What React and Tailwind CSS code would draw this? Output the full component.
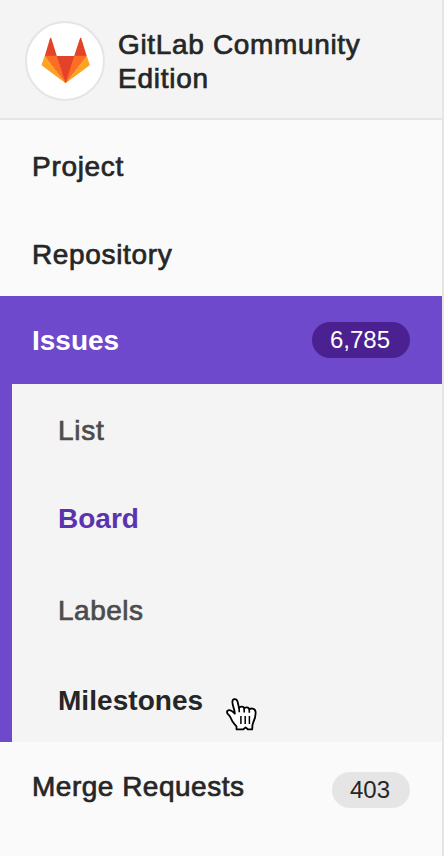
function Logo() {
  return (
    <svg className="h-full w-full" viewBox="0 0 80 80">
      <path fill="#e24329" d="M25.1 17.1a.6.6 0 0 1 1.1 0L31.8 35H49.2L55.1 17.1a.6.6 0 0 1 1.1 0L61.7 35 40.6 62.3 19.8 35Z" />
      <path fill="#fc6d26" d="M19.8 34.7H31.8L40.6 62.3ZM49.3 34.7H61.7L40.6 62.3Z" />
      <path fill="#fca326" d="M19.8 34.7 16.8 42.9a1.9 1.9 0 0 0 .7 2.1L40.6 62.3ZM61.7 34.7 64.5 42.9a1.9 1.9 0 0 1-.7 2.1L40.6 62.3Z" />
    </svg>
  );
}

function Pointer() {
  return (
    <svg className="absolute left-[225px] top-[697px] h-9 w-8" viewBox="0 0 32 36" fill="none">
      <path
        d="M11.5 32.3V29.5C9.5 27 7.5 25.5 6.5 22.5C5.8 20.3 4.7 18.8 3 17.2C1.5 15.7 1.7 13.8 3.3 13.3C5.7 12.6 7.7 14.4 9.8 16.7C9.9 12.5 7.5 9.5 7.4 5C7.3 1.3 11.5 1 12.5 4.5L14.1 11.2C14.5 9.1 19 8.9 19.2 11.7C20 9.7 24 9.8 24.3 12.7C25.4 10.9 30 11 30.5 14.5C31 18.5 29.9 22 28.3 25.2C27.3 27.2 27.2 29 27.2 32.3H22.8L20.6 30.4L18.3 32.3Z"
        fill="white" stroke="black" strokeWidth="1.8" strokeLinejoin="round"
      />
      <path d="M14.2 11V15.2M19.2 11.7V15.4M24.3 12.7V15.8" stroke="black" strokeWidth="1.6" />
      <path d="M15.9 19V27M20.2 19V27M24.4 19V27" stroke="black" strokeWidth="1.5" />
    </svg>
  );
}

export default function App() {
  return (
    <div className="relative h-[856px] w-[444px] overflow-hidden border-r-2 border-[#e5e5e5] bg-[#fafafa] font-['Liberation_Sans',Arial,sans-serif] text-[28px] text-[#262626]">
      <header className="flex h-[120px] border-b-2 border-[#e5e5e5] bg-[#f4f4f4] pl-[25px]">
        <div className="mt-[21px] h-20 w-20 shrink-0 overflow-hidden rounded-full border-2 border-[#e5e5e5] bg-white">
          <div className="-m-[2px] h-20 w-20"><Logo /></div>
        </div>
        <h1 className="ml-[13px] mt-7 leading-[34px] tracking-[0.66px] [-webkit-text-stroke:0.7px_currentColor]">
          GitLab Community<br />
          <span className="tracking-[0.75px]">Edition</span>
        </h1>
      </header>
      <nav>
        <a className="flex h-[88px] items-center pl-8 pt-1.5 tracking-[0.7px] [-webkit-text-stroke:0.7px_currentColor]">Project</a>
        <a className="flex h-[88px] items-center pl-8 pt-1.5 tracking-[0.65px] [-webkit-text-stroke:0.7px_currentColor]">Repository</a>
        <a className="flex h-[88px] items-center justify-between bg-[#6e49cb] px-8 font-bold text-white">
          <span className="pt-0.5">Issues</span>
          <span className="flex h-9 w-[98px] items-center justify-center rounded-full bg-[#4b2192] pr-0.5 text-2xl font-normal">6,785</span>
        </a>
        <div className="h-[358px] border-l-12 border-[#6e49cb] bg-[#f4f4f4] pl-[46px]">
          <a className="flex h-[92px] items-center pt-0.5 tracking-[0.7px] text-[#4c4c4c] [-webkit-text-stroke:0.7px_currentColor]">List</a>
          <a className="flex h-[84px] items-center pt-0.5 font-bold text-[#5b33ae]">Board</a>
          <a className="flex h-[100px] items-center pt-0.5 tracking-[0.5px] text-[#4c4c4c] [-webkit-text-stroke:0.7px_currentColor]">Labels</a>
          <a className="flex h-20 items-center pt-0.5 font-bold tracking-[0.05px]">Milestones</a>
        </div>
        <a className="flex h-[88px] items-center justify-between px-8">
          <span className="pt-0.5 tracking-[0.5px] [-webkit-text-stroke:0.7px_currentColor]">Merge Requests</span>
          <span className="mt-2 flex h-9 w-[78px] items-center justify-center rounded-full bg-[#e5e5e5] pr-0.5 text-2xl">403</span>
        </a>
      </nav>
      <Pointer />
    </div>
  );
}
